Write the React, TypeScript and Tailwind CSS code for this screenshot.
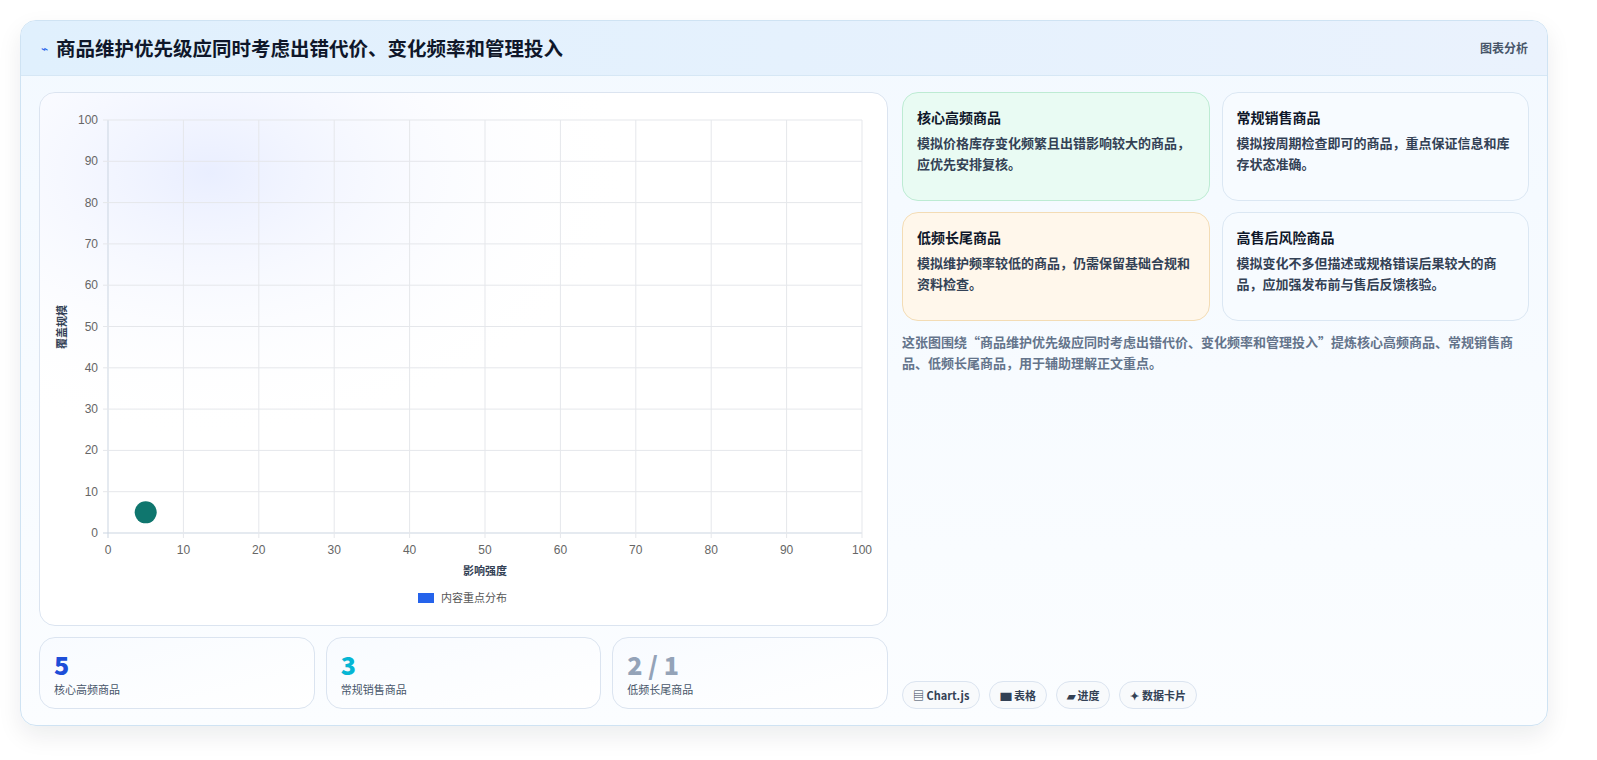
import React from 'react';

const font = { fontFamily: '"Noto Sans CJK SC", "Noto Sans", sans-serif' };

// 图表坐标（相对卡片）
const X0 = 68, X1 = 822, Y0 = 440, Y1 = 27;
const sx = (v: number) => X0 + ((X1 - X0) * v) / 100;
const sy = (v: number) => Y0 - ((Y0 - Y1) * v) / 100;
const ticks = [0, 10, 20, 30, 40, 50, 60, 70, 80, 90, 100];

function Chart() {
  return (
    <svg width="849" height="533" className="block">
      <defs>
        <radialGradient id="glow" cx="0.2" cy="0.15" r="0.5">
          <stop offset="0" stopColor="#e0e7ff" stopOpacity="0.7" />
          <stop offset="1" stopColor="#ffffff" stopOpacity="0" />
        </radialGradient>
      </defs>
      <rect x="0" y="0" width="849" height="533" fill="url(#glow)" />
      {ticks.map((t) => (
        <g key={t}>
          <line x1={sx(t)} x2={sx(t)} y1={Y1} y2={Y0 + 5} stroke={t === 0 ? '#cbd5e1' : '#e5e7eb'} />
          <line x1={X0 - 5} x2={X1} y1={sy(t)} y2={sy(t)} stroke={t === 0 ? '#cbd5e1' : '#e5e7eb'} />
          <text x={sx(t)} y={Y0 + 21} fontSize="12" fill="#666" textAnchor="middle" fontFamily="Liberation Sans, sans-serif">{t}</text>
          <text x={X0 - 10} y={sy(t) + 4} fontSize="12" fill="#666" textAnchor="end" fontFamily="Liberation Sans, sans-serif">{t}</text>
        </g>
      ))}
      <circle cx={sx(5)} cy={sy(5)} r="11" fill="#0f766e" />
      <text x={(X0 + X1) / 2} y="482" fontSize="11" fontWeight="700" fill="#334155" textAnchor="middle" style={font}>影响强度</text>
      <text x="26" y="234" fontSize="11" fontWeight="700" fill="#334155" textAnchor="middle" transform="rotate(-90 26 234)" style={font}>覆盖规模</text>
      <rect x="378" y="500" width="16" height="10" fill="#2563eb" />
      <text x="401" y="509" fontSize="11" fill="#555" style={font}>内容重点分布</text>
    </svg>
  );
}

function Stat({ n, label, color }: { n: string; label: string; color: string }) {
  return (
    <div className="flex-1 h-[72px] rounded-2xl border border-[#dbe4f0] bg-gradient-to-br from-[#f8fbff] to-white px-[14px] pt-[11px]">
      <div className={`text-[25px] leading-[30px] font-black ${color}`}>{n}</div>
      <div className="text-[11px] text-[#475569] mt-[2px]">{label}</div>
    </div>
  );
}

function Info({ title, text, cls }: { title: string; text: string; cls: string }) {
  return (
    <div className={`h-[109px] rounded-2xl border px-[14px] pt-[14px] ${cls}`}>
      <div className="text-[14px] font-bold text-[#0f172a] leading-5">{title}</div>
      <div className="text-[13px] font-semibold text-[#334155] leading-[21px] mt-[5px]">{text}</div>
    </div>
  );
}

export default function App() {
  return (
    <div className="w-[1597px] h-[760px] bg-white pt-[20px] pl-[20px]" style={font}>
      <div className="w-[1528px] h-[706px] rounded-2xl border border-[#cfe3f3] bg-gradient-to-b from-[#f3f9ff] to-[#fbfdff] shadow-[0_10px_25px_rgba(15,23,42,0.08)] overflow-hidden flex flex-col">
        <div className="h-[55px] shrink-0 flex items-center justify-between pl-[20px] pr-[19px] bg-gradient-to-r from-[#e0f0fd] to-[#eaf2fd] border-b border-[#d6e7f5]">
          <div className="flex items-center gap-[8px]">
            <span className="text-[12px] text-[#2563eb]">⌁</span>
            <span className="text-[19.5px] font-bold text-[#0f172a]">商品维护优先级应同时考虑出错代价、变化频率和管理投入</span>
          </div>
          <span className="text-[12px] text-[#475569] font-semibold">图表分析</span>
        </div>
        <div className="flex-1 flex gap-[14px] pl-[18px] pr-[18px] pt-[16px] pb-[17px]">
          <div className="w-[849px] flex flex-col gap-[11px]">
            <div className="h-[534px] rounded-2xl border border-[#dbe4f0] bg-white overflow-hidden">
              <Chart />
            </div>
            <div className="flex gap-[11px]">
              <Stat n="5" label="核心高频商品" color="text-[#1d4ed8]" />
              <Stat n="3" label="常规销售商品" color="text-[#06b6d4]" />
              <Stat n="2 / 1" label="低频长尾商品" color="text-[#94a3b8]" />
            </div>
          </div>
          <div className="flex-1 flex flex-col">
            <div className="grid grid-cols-2 gap-x-[12px] gap-y-[11px]">
              <Info title="核心高频商品" text="模拟价格库存变化频繁且出错影响较大的商品，应优先安排复核。" cls="bg-[#e9fbf3] border-[#bdebd3]" />
              <Info title="常规销售商品" text="模拟按周期检查即可的商品，重点保证信息和库存状态准确。" cls="bg-[#f7fbff] border-[#dbe7f3]" />
              <Info title="低频长尾商品" text="模拟维护频率较低的商品，仍需保留基础合规和资料检查。" cls="bg-[#fff7eb] border-[#f3dcb5]" />
              <Info title="高售后风险商品" text="模拟变化不多但描述或规格错误后果较大的商品，应加强发布前与售后反馈核验。" cls="bg-[#f7fbff] border-[#dbe7f3]" />
            </div>
            <p className="mt-[10px] text-[13px] font-semibold leading-[21px] text-[#64748b]">
              这张图围绕“商品维护优先级应同时考虑出错代价、变化频率和管理投入”提炼核心高频商品、常规销售商品、低频长尾商品，用于辅助理解正文重点。
            </p>
            <div className="mt-auto flex gap-[9px]">
              {['▤ Chart.js', '▆ 表格', '▰ 进度', '✦ 数据卡片'].map((t) => (
                <span key={t} className="h-[28px] px-[10px] flex items-center rounded-full border border-[#dbe4f0] bg-[#f8fafc] text-[11px] font-bold text-[#334155]">{t}</span>
              ))}
            </div>
          </div>
        </div>
      </div>
    </div>
  );
}
